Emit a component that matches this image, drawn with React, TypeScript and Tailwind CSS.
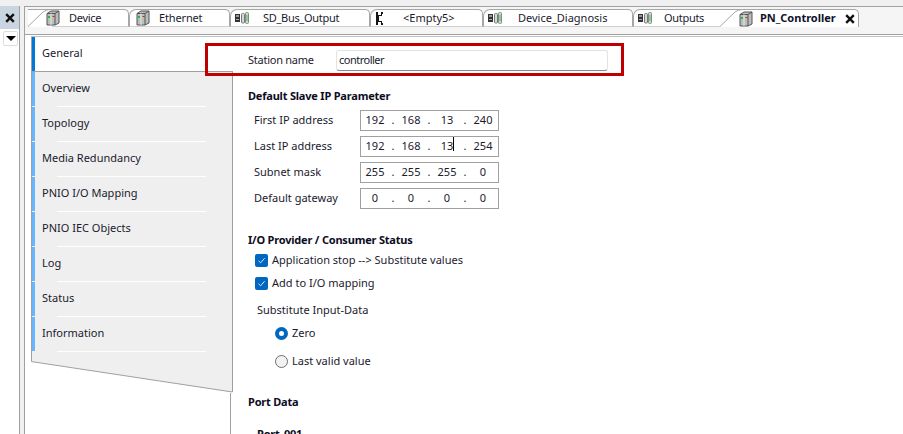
const FONT = "font-['Noto_Sans','Open_Sans',sans-serif]";

function DeviceIcon() {
  return (
    <svg width="14" height="16" viewBox="0 0 14 16" className="shrink-0">
      <path d="M1 3.5 L5 1 L13 1 L13 13 L9 15 L1 15 Z" fill="#b9bfbd" stroke="#555" strokeWidth="1" />
      <path d="M1 3.5 L9 3.5 L9 15 M9 3.5 L13 1" fill="none" stroke="#555" strokeWidth="1" />
      <path d="M5 3.5 V15" stroke="#e8e8e8" strokeWidth="1" />
      <rect x="2" y="6" width="2" height="2" fill="#19c22a" />
      <rect x="6.5" y="6" width="2" height="1" fill="#d02020" />
    </svg>
  );
}

function BusIcon() {
  return (
    <svg width="16" height="12" viewBox="0 0 16 12" className="shrink-0">
      <rect x="1" y="2" width="5" height="8" fill="#333" />
      <rect x="2" y="3" width="3" height="2" fill="#999" />
      <rect x="2" y="7" width="3" height="1" fill="#aaa" />
      <rect x="7.5" y="1.5" width="3" height="9.5" fill="#d6d9d6" stroke="#777" strokeWidth="1" rx="1" />
      <rect x="11.5" y="0.5" width="3" height="11" fill="#c8dcc8" stroke="#7f8f7f" strokeWidth="1" rx="1" />
      <rect x="12.5" y="3" width="1" height="6" fill="#5fb56a" />
    </svg>
  );
}

function EmptyIcon() {
  return (
    <svg width="8" height="13" viewBox="0 0 8 13" className="shrink-0">
      <path d="M1 0 H3 V3 H6 V0 H8 V2 H7 V4 H4 V9 H7 V11 H8 V13 H6 V10 H3 V13 H1 Z" fill="#151515" />
    </svg>
  );
}

function CloseIcon() {
  return (
    <svg width="10" height="10" viewBox="0 0 10 10" className="shrink-0">
      <path d="M1.2 1.2 L8.8 8.8 M8.8 1.2 L1.2 8.8" stroke="#111" strokeWidth="2.4" />
    </svg>
  );
}

function Slant({ className }: { className: string }) {
  return (
    <svg width="24" height="18" viewBox="0 0 24 18" className={className}>
      <path d="M0 18 L15 3 Q18 0.5 23 0.5 L24 0.5 L24 18 Z" fill="#ffffff" />
      <path d="M0 17.5 L15 3 Q18 0.5 23 0.5 L24 0.5" fill="none" stroke="#a6a6a6" strokeWidth="1" />
    </svg>
  );
}

const tabBase =
  "flex h-[18px] shrink-0 items-center border-t border-r border-b border-[#a6a6a6] border-b-[#cfcfcf] bg-white text-[11px] text-[#1a1a2e] rounded-tr-[5px]";
const tabCurved = "border-l rounded-tl-[7px]";

function Tabs() {
  return (
    <div className="flex h-[27px] items-start bg-[#f5f5f5] pl-[3px] pt-[2px]">
      <div className={`${tabBase} relative w-[101px]`}>
        <Slant className="absolute -top-px left-0" />
        <div className="relative ml-[18px]"><DeviceIcon /></div>
        <span className="relative ml-[9px] tracking-[-0.3px]">Device</span>
      </div>
      <div className={`${tabBase} ${tabCurved} w-[101px]`}>
        <div className="ml-[6px]"><DeviceIcon /></div>
        <span className="ml-[9px] tracking-[-0.15px]">Ethernet</span>
      </div>
      <div className={`${tabBase} ${tabCurved} w-[140px]`}>
        <div className="ml-[3px]"><BusIcon /></div>
        <span className="ml-[13px] tracking-[-0.3px]">SD_Bus_Output</span>
      </div>
      <div className={`${tabBase} ${tabCurved} w-[113px]`}>
        <div className="ml-[4px]"><EmptyIcon /></div>
        <span className="ml-[20px]">&lt;Empty5&gt;</span>
      </div>
      <div className={`${tabBase} ${tabCurved} w-[150px]`}>
        <div className="ml-[3px]"><BusIcon /></div>
        <span className="ml-[15px]">Device_Diagnosis</span>
      </div>
      <div className={`${tabBase} ${tabCurved} w-[98px]`}>
        <div className="ml-[3px]"><BusIcon /></div>
        <span className="ml-[11px] tracking-[-0.3px]">Outputs</span>
      </div>
      <div className="relative z-10 -ml-[11px] flex h-[18px] w-[139px] shrink-0 items-center rounded-tr-[5px] border-t border-r border-[#a6a6a6] bg-white text-[11px] font-bold text-[#10102a]">
        <Slant className="absolute -top-px left-0" />
        <div className="relative ml-[19px]"><DeviceIcon /></div>
        <span className="relative ml-[7px]">PN_Controller</span>
        <div className="relative ml-auto mr-[3px]"><CloseIcon /></div>
      </div>
    </div>
  );
}

const rows = [
  "Overview",
  "Topology",
  "Media Redundancy",
  "PNIO I/O Mapping",
  "PNIO IEC Objects",
  "Log",
  "Status",
  "Information",
];

function Sidebar() {
  return (
    <div className="flex w-[202px] shrink-0 flex-col">
      <div className="flex h-[35px] border-l border-b border-[#a0a0a0] bg-white">
        <div className="h-[34px] w-[3px] bg-[#0078d7]" />
        <div className="ml-[7px] flex h-[32px] items-center text-[11px] text-[#1a1a2e]">General</div>
      </div>
      {rows.map((r) => (
        <div key={r} className="flex h-[35px] border-l border-r border-[#a0a0a0] bg-[#efefef]">
          <div className="h-[34px] w-[3px] bg-[#66b5ff]" />
          <div className="relative flex h-[35px] flex-1 flex-col">
            <div className="ml-[7px] flex h-[32px] items-center text-[11px] text-[#1a1a2e]">{r}</div>
            <div className="ml-[22px] mt-[2px] h-px w-[149px] bg-white" />
          </div>
        </div>
      ))}
      <svg width="202" height="41" viewBox="0 0 202 41" className="shrink-0">
        <polygon points="0,0 202,0 202,40 200,40 0,9.5" fill="#efefef" />
        <path d="M0.5 0 V9.6 L200 39.8 H201.5 M201.5 0 V40" fill="none" stroke="#a0a0a0" strokeWidth="1" />
      </svg>
      <div className="ml-[199px] h-[60px] w-px bg-[#a0a0a0]" />
    </div>
  );
}

function Ip({ a, b, c, d, caret }: { a: string; b: string; c: string; d: string; caret?: boolean }) {
  const oct = "w-[26px] text-center";
  const dot = "w-[10px] text-center";
  return (
    <div className="flex h-[21px] w-[139px] items-center border border-[#a0a0a0] bg-white pl-px text-[11px] text-[#1a1a2e]">
      <span className={oct}>{a}</span>
      <span className={dot}>.</span>
      <span className={oct}>{b}</span>
      <span className={dot}>.</span>
      <span className={`${oct} relative`}>
        {c}
        {caret && <span className="absolute -top-px left-[19px] h-[14px] w-px bg-black" />}
      </span>
      <span className={dot}>.</span>
      <span className={oct}>{d}</span>
    </div>
  );
}

function IpRow({ label, children }: { label: string; children: React.ReactNode }) {
  return (
    <div className="flex h-[21px] items-center text-[11px] text-[#1a1a2e]">
      <span className="ml-[6px] w-[106px]">{label}</span>
      {children}
    </div>
  );
}

function Check({ label }: { label: string }) {
  return (
    <div className="ml-[7px] flex h-[14px] items-center text-[11px] text-[#1a1a2e]">
      <span className="flex h-[13px] w-[13px] items-center justify-center rounded-[2px] bg-[#0067c0]">
        <svg width="9" height="9" viewBox="0 0 9 9">
          <path d="M1.5 4.8 L3.6 6.8 L7.6 2.2" fill="none" stroke="#dceaf7" strokeWidth="1" />
        </svg>
      </span>
      <span className="ml-[4px]">{label}</span>
    </div>
  );
}

function Heading({ children, className }: { children: React.ReactNode; className: string }) {
  return <div className={`text-[11px] font-bold tracking-[-0.2px] text-[#0c0c1e] ${className}`}>{children}</div>;
}

function Content() {
  return (
    <div className="flex min-w-0 flex-1 flex-col pl-[15px]">
      <div className="mt-[13px] flex h-[21px] items-center text-[11px] text-[#1a1a2e]">
        <span className="w-[88px] tracking-[-0.25px]">Station name</span>
        <div className="flex h-[21px] w-[272px] items-center rounded-[3px] border border-[#e2e2e2] border-b-[#8a8a8a] bg-white pl-[2px] tracking-[-0.5px]">controller</div>
      </div>
      <Heading className="mt-[17px] flex h-[16px] items-center">Default Slave IP Parameter</Heading>
      <div className="mt-[6px] flex flex-col gap-[5px]">
        <IpRow label="First IP address"><Ip a="192" b="168" c="13" d="240" /></IpRow>
        <IpRow label="Last IP address"><Ip a="192" b="168" c="13" d="254" caret /></IpRow>
        <IpRow label="Subnet mask"><Ip a="255" b="255" c="255" d="0" /></IpRow>
        <IpRow label="Default gateway"><Ip a="0" b="0" c="0" d="0" /></IpRow>
      </div>
      <Heading className="mt-[23px] flex h-[16px] items-center">I/O Provider / Consumer Status</Heading>
      <div className="mt-[5px] flex flex-col gap-[9px]">
        <Check label="Application stop --> Substitute values" />
        <Check label="Add to I/O mapping" />
      </div>
      <div className="ml-[9px] mt-[12px] flex h-[16px] items-center text-[11px] text-[#1a1a2e]">Substitute Input-Data</div>
      <div className="ml-[27px] mt-[8px] flex h-[14px] items-center text-[11px] text-[#1a1a2e]">
        <span className="flex h-[13px] w-[13px] items-center justify-center rounded-full bg-[#0067c0]">
          <span className="h-[5px] w-[5px] rounded-full bg-white" />
        </span>
        <span className="ml-[4px]">Zero</span>
      </div>
      <div className="ml-[27px] mt-[14px] flex h-[14px] items-center text-[11px] text-[#1a1a2e]">
        <span className="h-[13px] w-[13px] rounded-full border border-[#6e6e6e] bg-[#f2f2f2]" />
        <span className="ml-[4px]">Last valid value</span>
      </div>
      <Heading className="mt-[26px] flex h-[16px] items-center">Port Data</Heading>
      <Heading className="ml-[9px] mt-[16px] flex h-[16px] items-center">Port_001</Heading>
    </div>
  );
}

export default function App() {
  return (
    <div className={`relative flex h-[434px] w-[903px] overflow-hidden bg-[#f0f0f0] ${FONT}`}>
      <div className="mt-[6px] flex w-[20px] shrink-0 flex-col border-r border-[#a0a0a0] bg-white">
        <div className="flex h-[23px] items-center justify-center bg-[#c9d5e1]">
          <CloseIcon />
        </div>
        <div className="ml-[3px] mt-[2px] flex h-[15px] w-[15px] items-center justify-center rounded-[2px] border border-[#dcdcdc] bg-white">
          <div className="h-0 w-0 border-x-[5px] border-t-[5px] border-x-transparent border-t-black" />
        </div>
      </div>
      <div className="mt-[6px] ml-[4px] flex min-w-0 flex-1 flex-col border-l border-t border-[#a0a0a0] bg-white">
        <Tabs />
        <div className="h-px bg-[#a0a0a0]" />
        <div className="h-px bg-white" />
        <div className="ml-[6px] h-px bg-[#c0c0c0]" />
        <div className="flex min-h-0 flex-1 pl-[6px]">
          <Sidebar />
          <Content />
        </div>
      </div>
      <div className="absolute left-[205px] top-[43px] h-[33px] w-[419px] border-[3px] border-[#c00000]" />
    </div>
  );
}
